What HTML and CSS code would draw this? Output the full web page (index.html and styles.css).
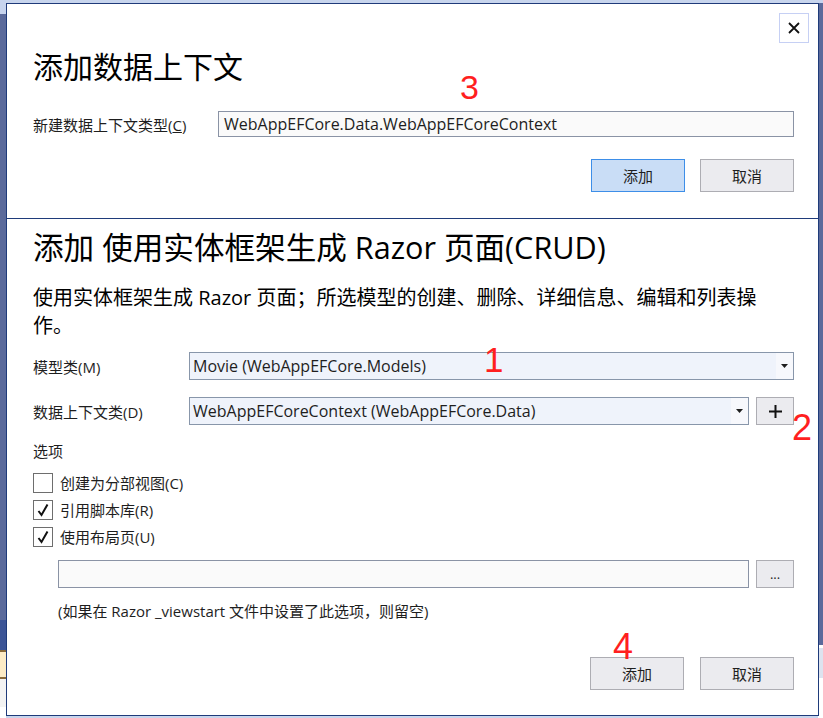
FILE: index.html
```html
<!DOCTYPE html>
<html lang="zh-CN">
<head>
<meta charset="utf-8">
<title>添加 使用实体框架生成 Razor 页面(CRUD)</title>
<link rel="stylesheet" href="styles.css">
</head>
<body>
<div class="dialog">
  <section class="ctx">
    <button class="close" aria-label="关闭">
      <svg width="12" height="12" viewBox="0 0 12 12"><path d="M1 1 L11 11 M11 1 L1 11" stroke="#111" stroke-width="1.8" fill="none"/></svg>
    </button>
    <h1 class="ctx-title">添加数据上下文</h1>
    <div class="ctx-row">
      <label class="ctx-label">新建数据上下文类型(<u>C</u>)</label>
      <div class="textbox">WebAppEFCore.Data.WebAppEFCoreContext</div>
    </div>
    <div class="actions ctx-actions">
      <button class="btn primary">添加</button>
      <button class="btn">取消</button>
    </div>
    <span class="mark mark-3">3</span>
  </section>

  <section class="scaffold">
    <h2 class="scaffold-title">添加 使用实体框架生成 Razor 页面(CRUD)</h2>
    <p class="desc">使用实体框架生成 Razor 页面；所选模型的创建、删除、详细信息、编辑和列表操作。</p>

    <div class="field field-model">
      <label class="field-label">模型类(M)</label>
      <div class="select">
        <span class="select-text">Movie (WebAppEFCore.Models)</span>
        <span class="caret"><svg width="7" height="4" viewBox="0 0 7 4"><path d="M0 0 H7 L3.5 4 Z" fill="#1e1e1e"/></svg></span>
      </div>
    </div>

    <div class="field field-ctx">
      <label class="field-label">数据上下文类(D)</label>
      <div class="select">
        <span class="select-text">WebAppEFCoreContext (WebAppEFCore.Data)</span>
        <span class="caret"><svg width="7" height="4" viewBox="0 0 7 4"><path d="M0 0 H7 L3.5 4 Z" fill="#1e1e1e"/></svg></span>
      </div>
      <button class="btn square plus">
        <svg width="13" height="13" viewBox="0 0 13 13"><path d="M6.5 0 V13 M0 6.5 H13" stroke="#111" stroke-width="2" fill="none"/></svg>
      </button>
    </div>

    <div class="group-label">选项</div>

    <div class="checks">
      <div class="check"><span class="box"></span><span>创建为分部视图(C)</span></div>
      <div class="check"><span class="box"><svg width="12" height="14" viewBox="0 0 12 14"><path d="M1.5 8 L4.5 12 L10.5 1.5" stroke="#111" stroke-width="2" fill="none" stroke-linejoin="miter"/></svg></span><span>引用脚本库(R)</span></div>
      <div class="check"><span class="box"><svg width="12" height="14" viewBox="0 0 12 14"><path d="M1.5 8 L4.5 12 L10.5 1.5" stroke="#111" stroke-width="2" fill="none" stroke-linejoin="miter"/></svg></span><span>使用布局页(U)</span></div>
    </div>

    <div class="layout-row">
      <div class="textbox layout-box"></div>
      <button class="btn square dots">...</button>
    </div>
    <p class="hint">(如果在 Razor _viewstart 文件中设置了此选项，则留空)</p>

    <div class="actions scaffold-actions">
      <button class="btn">添加</button>
      <button class="btn">取消</button>
    </div>

    <span class="mark mark-1">1</span>
    <span class="mark mark-2">2</span>
    <span class="mark mark-4">4</span>
  </section>
</div>
</body>
</html>
```

FILE: styles.css
```css
html, body {
  margin: 0;
  padding: 0;
}

body {
  width: 823px;
  height: 718px;
  overflow: hidden;
  font-family: "Open Sans", "Noto Sans CJK SC", sans-serif;
  color: #1e1e1e;
  /* editor window behind the dialog: left and right slivers plus the tab strip */
  background:
    linear-gradient(to bottom,
      #c7d4ee 0, #c7d4ee 14px,
      #5b6a9b 14px, #5b6a9b 620px,
      #3c5597 620px, #3c5597 650px,
      #8a6a3a 650px, #8a6a3a 652px,
      #fdecc6 652px, #fdecc6 677px,
      #8a6a3a 677px, #8a6a3a 679px,
      #f3f3f3 679px, #f3f3f3 707px,
      #ffffff 707px) left top / 6px 100% no-repeat,
    linear-gradient(to bottom,
      #c7d4ee 0, #c7d4ee 3px,
      #5b6a9b 3px, #5b6a9b 645px,
      #ffffff 645px, #ffffff 648px,
      #dde3ef 648px, #dde3ef 678px,
      #ffffff 678px) right top / 5px 100% no-repeat,
    #c8d5ed;
  box-sizing: border-box;
  padding: 3px 0 0 6px;
}

.dialog {
  width: 811px;
  height: 711px;
  border: 1px solid #1f3b7a;
  background: #fff;
  display: flex;
  flex-direction: column;
}

/* ---------- new data context panel ---------- */

.ctx {
  position: relative;
  height: 214px;
  border-bottom: 1px solid #1f3b7a;
  padding: 0 24px 0 26px;
  display: flex;
  flex-direction: column;
}

.close {
  position: absolute;
  top: 9px;
  right: 9px;
  width: 30px;
  height: 30px;
  border: 1px solid #c6d0f4;
  background: #fff;
  padding: 0;
  display: flex;
  align-items: center;
  justify-content: center;
}

.ctx-title {
  margin: 43px 0 0;
  font-size: 30px;
  line-height: 40px;
  font-weight: normal;
  color: #000;
}

.ctx-row {
  margin-top: 24px;
  display: flex;
  align-items: center;
}

.ctx-label {
  width: 185px;
  font-size: 15px;
}

.textbox {
  box-sizing: border-box;
  flex: 1;
  height: 26px;
  border: 1px solid #8a93a5;
  background: #fafafa;
  font-size: 16px;
  line-height: 24px;
  padding-left: 5px;
  color: #1e1e1e;
  white-space: nowrap;
}

.actions {
  display: flex;
  justify-content: flex-end;
  gap: 15px;
}

.ctx-actions {
  margin-top: 22px;
}

.btn {
  box-sizing: border-box;
  width: 94px;
  height: 33px;
  border: 1px solid #adadb3;
  background: #ebebef;
  font-family: "Open Sans", "Noto Sans CJK SC", sans-serif;
  font-size: 15px;
  color: #1e1e1e;
  padding: 0;
}

.btn.primary {
  background: #c9ddf6;
  border-color: #3d8ee8;
}

/* ---------- scaffold panel ---------- */

.scaffold {
  position: relative;
  flex: 1;
  padding: 0 24px 0 26px;
  display: flex;
  flex-direction: column;
}

.scaffold-title {
  margin: 9px 0 0;
  font-size: 30.6px;
  line-height: 38px;
  font-weight: normal;
  color: #000;
  white-space: nowrap;
}

.desc {
  margin: 18px 0 0;
  font-size: 20px;
  line-height: 28px;
  color: #000;
}

.field {
  display: flex;
  align-items: center;
}

.field-model {
  margin-top: 12px;
}

.field-ctx {
  margin-top: 17px;
}

.field-label {
  width: 156px;
  flex: none;
  font-size: 15px;
}

.select {
  box-sizing: border-box;
  flex: 1;
  height: 28px;
  border: 1px solid #8896aa;
  background: #eff3fb;
  display: flex;
  align-items: stretch;
}

.select-text {
  flex: 1;
  font-size: 16px;
  line-height: 26px;
  padding-left: 3px;
  white-space: nowrap;
}

.caret {
  width: 17px;
  background: #f7f8fc;
  display: flex;
  align-items: center;
  justify-content: center;
}

.square {
  width: 38px;
  height: 28px;
}

.plus {
  margin-left: 7px;
  display: flex;
  align-items: center;
  justify-content: center;
}

.group-label {
  margin-top: 16px;
  font-size: 15px;
  line-height: 20px;
}

.checks {
  margin-top: 12px;
  display: flex;
  flex-direction: column;
  gap: 7px;
}

.check {
  display: flex;
  align-items: center;
  gap: 7px;
  font-size: 15px;
  line-height: 20px;
}

.box {
  box-sizing: border-box;
  width: 20px;
  height: 20px;
  border: 1px solid #6e6e6e;
  background: #fff;
  display: flex;
  align-items: center;
  justify-content: center;
}

.layout-row {
  margin-top: 13px;
  padding-left: 25px;
  display: flex;
  gap: 7px;
}

.layout-box {
  height: 28px;
}

.dots {
  font-size: 13px;
  line-height: 20px;
}

.hint {
  margin: 13px 0 0 25px;
  font-size: 15px;
  line-height: 20px;
}

.scaffold-actions {
  margin-top: 36px;
  gap: 16px;
}

/* red step numbers drawn over the dialog */
.mark {
  position: absolute;
  font-family: "Liberation Sans", sans-serif;
  color: #ff1f1f;
  font-size: 36px;
  line-height: 26px;
}

.mark-3 { left: 453px; top: 71px; font-size: 34px; line-height: 25px; }
.mark-1 { left: 477px; top: 128px; font-size: 35px; }
.mark-2 { left: 785px; top: 196px; }
.mark-4 { left: 606px; top: 415px; }
```
